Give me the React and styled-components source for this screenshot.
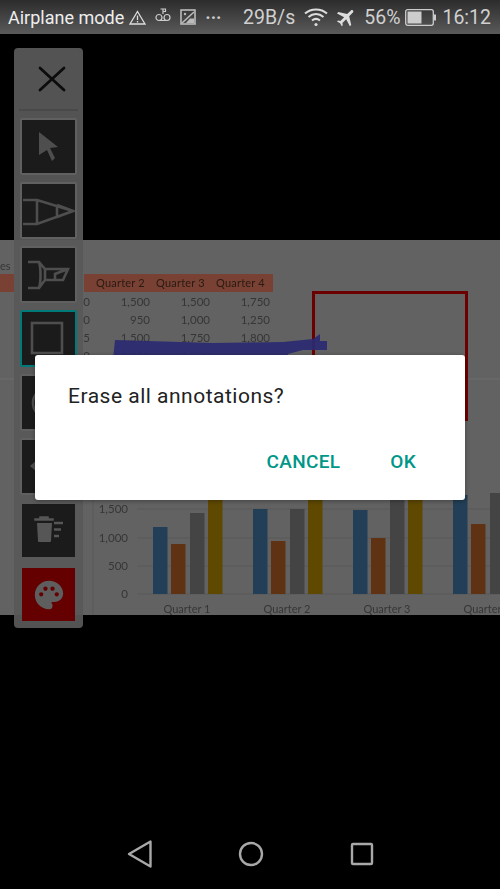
import React from 'react'
import styled, { createGlobalStyle } from 'styled-components'
import { MdFlight, MdPalette } from 'react-icons/md'

const GlobalStyle = createGlobalStyle`
  html, body {
    margin: 0;
    padding: 0;
    background: #000;
  }
  * {
    box-sizing: border-box;
  }
`

const rows = [
  ['0', '1,500', '1,500', '1,750'],
  ['0', '950', '1,000', '1,250'],
  ['5', '1,500', '1,750', '1,800'],
  ['0', '2,200', '2,700', ''],
]

const quarters = [
  { label: 'Quarter 1', x: 153, tops: [527, 544, 513, 480] },
  { label: 'Quarter 2', x: 253, tops: [509, 541, 509, 480] },
  { label: 'Quarter 3', x: 353, tops: [510, 538, 480, 480] },
  { label: 'Quarter 4', x: 453, tops: [495, 524, 493, 480] },
]

const barColors = ['#223f57', '#5e3213', '#444444', '#5f4900']
const barOffsets = [0, 18, 37, 55]
const axis = [
  ['1,500', 509],
  ['1,000', 538],
  ['500', 566],
  ['0', 594],
]

const ToolIcon = ({ children }) => (
  <svg width="53" height="53" viewBox="0 0 53 53" fill="none" stroke="#4e4e4e" strokeWidth="2.6">
    {children}
  </svg>
)

const Chart = () => (
  <ChartSvg width="500" height="240" viewBox="0 378 500 240">
    <line x1="0" x2="500" y1="379" y2="379" stroke="#6c6c6c" />
    <line x1="93" x2="93" y1="378" y2="615" stroke="#585858" />
    {axis.map(([label, y]) => (
      <g key={label}>
        <line x1="137" x2="500" y1={y} y2={y} stroke="#585858" />
        <text x="128" y={y + 4} textAnchor="end" fontSize="11.5" fill="#363636">
          {label}
        </text>
      </g>
    ))}
    {quarters.map((q) => (
      <g key={q.label}>
        {q.tops.map((top, i) => (
          <rect
            key={i}
            x={q.x + barOffsets[i]}
            y={top}
            width="14.5"
            height={594 - top}
            fill={barColors[i]}
          />
        ))}
        <text x={q.x + 34} y="613" textAnchor="middle" fontSize="11" fill="#363636">
          {q.label}
        </text>
      </g>
    ))}
  </ChartSvg>
)

const App = () => (
  <Screen>
    <GlobalStyle />
    <StatusBar>
      <StatusGroup>
        <AirplaneText>Airplane mode</AirplaneText>
        <NoticeIcons>
          <svg width="17" height="15" viewBox="0 0 17 15" fill="none" stroke="#ddd" strokeWidth="1.3">
            <path d="M8.5 1.5 L16 14 H1 Z" />
            <path d="M8.5 5.5 V10 M8.5 11 V12.5" />
          </svg>
          <VoicemailIcon width="16" height="14" viewBox="0 0 16 14" fill="none" stroke="#ccc" strokeWidth="1.2">
            <circle cx="4" cy="9.5" r="3" />
            <circle cx="12" cy="9.5" r="3" />
            <path d="M4 12.5 H12 M8 1 V6 M5.5 1 H10.5 L10.5 3.5 H8" />
          </VoicemailIcon>
          <svg width="16" height="16" viewBox="0 0 16 16" fill="none" stroke="#bbb" strokeWidth="1.6">
            <rect x="1" y="1" width="14" height="14" />
            <path d="M2 14 L14 3" />
            <circle cx="5" cy="5" r="1.2" fill="#bbb" stroke="none" />
            <path d="M10 9.5 L14 9.5 L14 14 L6 14 Z" fill="#bbb" stroke="none" />
          </svg>
          <Dots>···</Dots>
        </NoticeIcons>
      </StatusGroup>
      <StatusGroup>
        <StatusText>29B/s</StatusText>
        <WifiIcon width="24" height="20" viewBox="0 0 24 20" fill="none" stroke="#ddd" strokeWidth="2">
          <path d="M1 6.5 C7 1 17 1 23 6.5" />
          <path d="M4.5 10 C9 6 15 6 19.5 10" />
          <path d="M8 13.5 C10.5 11.5 13.5 11.5 16 13.5" />
          <circle cx="12" cy="17.5" r="1.6" fill="#ddd" stroke="none" />
        </WifiIcon>
        <PlaneIcon size={23} color="#ddd" />
        <StatusText $gap={6}>56%</StatusText>
        <BatteryIcon width="31" height="17" viewBox="0 0 31 17">
          <rect x="0.7" y="0.7" width="27.6" height="15.6" rx="2" fill="none" stroke="#ccc" strokeWidth="1.3" />
          <rect x="2.5" y="2.5" width="14" height="12" fill="#ccc" />
          <rect x="29" y="5.5" width="2" height="6" fill="#ccc" />
        </BatteryIcon>
        <StatusText $gap={6}>16:12</StatusText>
      </StatusGroup>
    </StatusBar>

    <Stage>
      <Sheet>
        <SheetLabel>es</SheetLabel>
        <HeaderStrip>
          <HeaderStub />
          <HeaderCells>
            <HeaderCell />
            <HeaderCell>Quarter 2</HeaderCell>
            <HeaderCell>Quarter 3</HeaderCell>
            <HeaderCell>Quarter 4</HeaderCell>
          </HeaderCells>
        </HeaderStrip>
        <Table>
          {rows.map((row, i) => (
            <TableRow key={i}>
              {row.map((cell, j) => (
                <TableCell key={j}>{cell}</TableCell>
              ))}
            </TableRow>
          ))}
        </Table>
        <Chart />
        <RedBox />
        <InkStroke width="220" height="26" viewBox="0 0 220 26">
          <path
            d="M2 7 L100 10 L170 9 L200 6 L207 1 L207 8 L214 8 L214 17 L190 17 L175 21 L175 26 L0 26 Z"
            fill="#2c2b72"
          />
        </InkStroke>
      </Sheet>

      <Toolbar>
        <CloseButton>
          <svg width="28" height="26" viewBox="0 0 28 26" stroke="#0c0c0c" strokeWidth="2.8" strokeLinecap="round">
            <path d="M2 2 L26 24 M26 2 L2 24" />
          </svg>
        </CloseButton>
        <Divider />
        <Tools>
          <Tool>
            <ToolIcon>
              <path d="M17 12 L36 27 L28 28 L33 38 L30 41 L25 30 L17 35 Z" fill="#4e4e4e" stroke="none" />
            </ToolIcon>
          </Tool>
          <Tool>
            <ToolIcon>
              <path d="M1 16 H15 L51 27 L15 40 H1 M15 16 V40 M35 21 L35 33 M35 21 L51 27 L35 33" />
            </ToolIcon>
          </Tool>
          <Tool>
            <ToolIcon>
              <path d="M6 14 H17 L23 21 H46 L41 32 H23 L17 40 H6 M17 14 C19 20 19 34 17 40 M23 21 V32 M33 32 V26 L46 21" />
            </ToolIcon>
          </Tool>
          <Tool $active>
            <ToolIcon>
              <rect x="10" y="11" width="30" height="30" strokeWidth="2.6" />
            </ToolIcon>
          </Tool>
          <Tool>
            <ToolIcon>
              <circle cx="26" cy="27" r="15" />
            </ToolIcon>
          </Tool>
          <Tool>
            <ToolIcon>
              <path d="M8 26 L16 19 V33 Z" fill="#4e4e4e" stroke="none" />
              <path d="M14 26 H45" />
            </ToolIcon>
          </Tool>
          <Tool $plain>
            <ToolIcon>
              <path d="M13 15 H31 V16 H13 Z M18 13 H26 V15 H18 Z" fill="#565656" stroke="#565656" strokeWidth="1.5" />
              <path d="M15 19 H30 L29 37 Q29 38 28 38 H17 Q16 38 16 37 Z" fill="#565656" stroke="none" />
              <path d="M32 19 H41 M32 25.5 H39 M32 32 H37" stroke="#565656" strokeWidth="2.4" />
            </ToolIcon>
          </Tool>
          <Tool $red $plain>
            <MdPalette size={34} color="#5e5e5e" />
          </Tool>
        </Tools>
      </Toolbar>

      <Dialog>
        <DialogTitle>Erase all annotations?</DialogTitle>
        <DialogActions>
          <DialogButton>CANCEL</DialogButton>
          <DialogButton>OK</DialogButton>
        </DialogActions>
      </Dialog>
    </Stage>

    <NavBar>
      <svg width="26" height="30" viewBox="0 0 26 30" fill="none" stroke="#a8a8a8" strokeWidth="2.4" strokeLinejoin="round">
        <path d="M2 15 L23.5 2.5 V27.5 Z" />
      </svg>
      <svg width="26" height="26" viewBox="0 0 26 26" fill="none" stroke="#a8a8a8" strokeWidth="2.4">
        <circle cx="13" cy="13" r="11" />
      </svg>
      <svg width="26" height="26" viewBox="0 0 26 26" fill="none" stroke="#a8a8a8" strokeWidth="2.4" strokeLinejoin="round">
        <rect x="3" y="3" width="20" height="20" rx="1" />
      </svg>
    </NavBar>
  </Screen>
)

export default App

const Screen = styled.div`
  width: 500px;
  height: 889px;
  display: flex;
  flex-direction: column;
  background: #000;
  overflow: hidden;
  font-family: Roboto, 'Noto Sans', sans-serif;
`

const StatusBar = styled.div`
  height: 34px;
  flex: none;
  display: flex;
  align-items: center;
  justify-content: space-between;
  padding: 0 9px 0 8px;
  background: linear-gradient(#2c2c2c, #5a5a5a);
`

const StatusGroup = styled.div`
  display: flex;
  align-items: center;
`

const AirplaneText = styled.span`
  font-size: 18px;
  color: #eeeeee;
  margin-right: 5px;
`

const NoticeIcons = styled.div`
  display: flex;
  align-items: center;
  gap: 9px;
`

const VoicemailIcon = styled.svg`
  margin-top: -4px;
`

const StatusText = styled.span`
  font-size: 19.5px;
  color: #d0d0d0;
  margin-left: ${(props) => props.$gap || 0}px;
`

const Dots = styled.span`
  color: #ccc;
  font-size: 18px;
  font-weight: 700;
`

const WifiIcon = styled.svg`
  margin-left: 9px;
`

const PlaneIcon = styled(MdFlight)`
  margin-left: 7px;
  transform: rotate(45deg);
`

const BatteryIcon = styled.svg`
  margin-left: 5px;
`

const Stage = styled.div`
  flex: 1;
  position: relative;
  padding-top: 206px;
`

const Sheet = styled.div`
  position: relative;
  height: 375px;
  background: #626262;
  padding-top: 34px;
  overflow: hidden;
  font-family: Lato, 'Open Sans', sans-serif;
  filter: blur(0.7px);
`

const SheetLabel = styled.div`
  position: absolute;
  left: 0;
  top: 19px;
  font-size: 11px;
  color: #363636;
`

const HeaderStrip = styled.div`
  display: flex;
  height: 18px;
`

const HeaderStub = styled.div`
  width: 14px;
  background: #784133;
  margin-right: 70px;
`

const HeaderCells = styled.div`
  width: 189px;
  display: grid;
  grid-template-columns: 8px 60px 60px 60px;
  background: #784133;
`

const HeaderCell = styled.div`
  font-size: 11px;
  line-height: 18px;
  color: #2a1a13;
  letter-spacing: 0.2px;
  padding-left: 4px;
  white-space: nowrap;
`

const Table = styled.div`
  width: 270px;
  height: 72px;
  padding-left: 10px;
`

const TableRow = styled.div`
  display: grid;
  grid-template-columns: 80px 60px 60px 60px;
  height: 18px;
  align-items: center;
`

const TableCell = styled.div`
  font-size: 11.5px;
  color: #363636;
  text-align: right;
`

const ChartSvg = styled.svg`
  display: block;
  margin-top: 14px;
  font-family: Lato, 'Open Sans', sans-serif;
`

const RedBox = styled.div`
  position: absolute;
  left: 312px;
  top: 51px;
  width: 156px;
  height: 130px;
  border: 3px solid #6c0000;
`

const InkStroke = styled.svg`
  position: absolute;
  left: 113px;
  top: 93px;
  opacity: 0.93;
`

const Toolbar = styled.div`
  position: absolute;
  left: 14px;
  top: 14px;
  width: 69px;
  height: 580px;
  background: rgba(88, 88, 88, 0.94);
  border-radius: 4px;
  display: flex;
  flex-direction: column;
  align-items: center;
`

const CloseButton = styled.div`
  height: 61px;
  flex: none;
  display: flex;
  align-items: center;
  justify-content: center;
  margin-left: 7px;
`

const Divider = styled.div`
  width: 59px;
  height: 2px;
  flex: none;
  background: #494949;
`

const Tools = styled.div`
  display: flex;
  flex-direction: column;
  gap: 7px;
  margin-top: 7px;
`

const Tool = styled.div`
  width: 57px;
  height: 57px;
  flex: none;
  display: flex;
  align-items: center;
  justify-content: center;
  background: ${(props) => (props.$red ? '#640000' : '#1b1b1b')};
  background-clip: padding-box;
  border: 2px solid
    ${(props) => {
      if (props.$active) return '#007a78'
      return props.$plain ? 'transparent' : '#606060'
    }};
  border-radius: 2px;
`

const Dialog = styled.div`
  position: absolute;
  left: 35px;
  top: 321px;
  width: 430px;
  height: 145px;
  background: #fff;
  border-radius: 3px;
  box-shadow: 0 1px 4px rgba(0, 0, 0, 0.35);
  padding: 27px 33px 0;
  display: flex;
  flex-direction: column;
  justify-content: space-between;
`

const DialogTitle = styled.div`
  font-size: 21px;
  line-height: 28px;
  color: #222;
  letter-spacing: 0.5px;
`

const DialogActions = styled.div`
  display: flex;
  justify-content: flex-end;
  gap: 50px;
  padding: 0 16px 26px 0;
`

const DialogButton = styled.div`
  font-size: 19px;
  font-weight: 500;
  line-height: 24px;
  letter-spacing: 0.3px;
  color: #009688;
`

const NavBar = styled.div`
  height: 64px;
  flex: none;
  display: flex;
  align-items: center;
  justify-content: center;
  gap: 85px;
  padding: 0 0 6px 2px;
`
